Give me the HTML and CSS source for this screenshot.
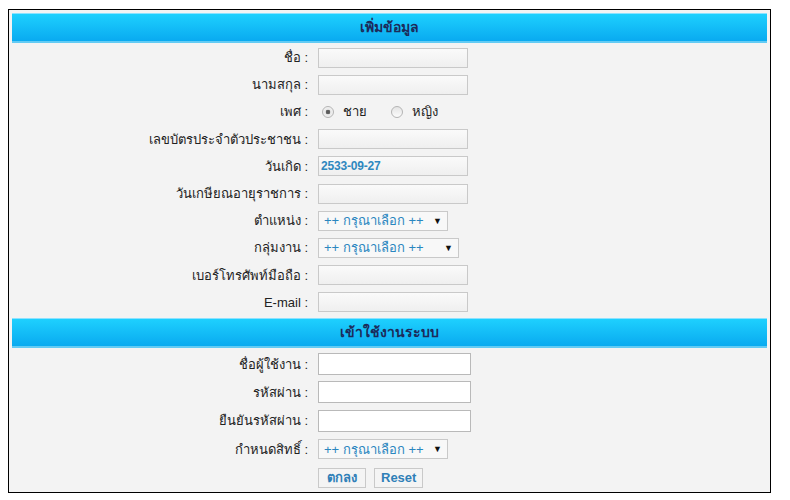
FILE: index.html
```html
<!DOCTYPE html>
<html lang="th">
<head>
    <meta charset="UTF-8">
    <meta name="viewport" content="width=device-width, initial-scale=1.0">
    <title>เพิ่มข้อมูล</title>
    <link rel="stylesheet" href="styles.css">
</head>
<body>
    <form class="panel">
        <div class="bar">เพิ่มข้อมูล</div>
        <div class="rows info">
            <div class="row"><label class="lbl">ชื่อ :</label><input type="text" class="txt"></div>
            <div class="row"><label class="lbl">นามสกุล :</label><input type="text" class="txt"></div>
            <div class="row">
                <label class="lbl">เพศ :</label>
                <div class="radios">
                    <label class="opt"><input type="radio" name="sex" class="rad" checked> ชาย</label>
                    <label class="opt"><input type="radio" name="sex" class="rad"> หญิง</label>
                </div>
            </div>
            <div class="row"><label class="lbl">เลขบัตรประจำตัวประชาชน :</label><input type="text" class="txt"></div>
            <div class="row"><label class="lbl">วันเกิด :</label><input type="text" class="txt date" value="2533-09-27"></div>
            <div class="row"><label class="lbl">วันเกษียณอายุราชการ :</label><input type="text" class="txt"></div>
            <div class="row">
                <label class="lbl">ตำแหน่ง :</label>
                <div class="sel"><select><option>++ กรุณาเลือก ++</option></select><span class="arrow">▼</span></div>
            </div>
            <div class="row">
                <label class="lbl">กลุ่มงาน :</label>
                <div class="sel wide"><select><option>++ กรุณาเลือก ++</option></select><span class="arrow">▼</span></div>
            </div>
            <div class="row"><label class="lbl">เบอร์โทรศัพท์มือถือ :</label><input type="text" class="txt"></div>
            <div class="row"><label class="lbl">E-mail :</label><input type="text" class="txt"></div>
        </div>

        <div class="bar">เข้าใช้งานระบบ</div>
        <div class="rows login">
            <div class="row"><label class="lbl">ชื่อผู้ใช้งาน :</label><input type="text" class="txt big"></div>
            <div class="row"><label class="lbl">รหัสผ่าน :</label><input type="password" class="txt big"></div>
            <div class="row"><label class="lbl">ยืนยันรหัสผ่าน :</label><input type="password" class="txt big"></div>
            <div class="row">
                <label class="lbl">กำหนดสิทธิ์ :</label>
                <div class="sel"><select><option>++ กรุณาเลือก ++</option></select><span class="arrow">▼</span></div>
            </div>
            <div class="row">
                <span class="lbl"></span>
                <div class="btns">
                    <button type="submit" class="btn">ตกลง</button>
                    <button type="reset" class="btn">Reset</button>
                </div>
            </div>
        </div>
    </form>
</body>
</html>
```

FILE: styles.css
```css
body {
    margin: 8px;
    background: #fff;
    font-family: Tahoma, "Liberation Sans", "DejaVu Sans", sans-serif;
    font-size: 13px;
    color: #222;
}
.panel {
    width: 755px;
    margin: 1px 0 0 0;
    padding: 3px 3px 0 3px;
    border: 1px solid #000;
    background-color: #f3f3f3;
}
.bar {
    height: 30px;
    box-sizing: border-box;
    border-top: 1px solid #8be2ff;
    border-bottom: 2px solid #62cbf4;
    background: linear-gradient(#1ed0fe, #09aaf0);
    text-align: center;
    font-weight: bold;
    font-size: 14px;
    line-height: 26px;
    color: #1c2b5a;
}
.rows.info {
    padding: 1px 0 2px 0;
}
.rows.info .row {
    height: 27.2px;
}
.rows.login {
    padding-top: 2px;
}
.rows.login .row {
    height: 28.4px;
}
.row {
    display: flex;
    align-items: center;
}
.lbl {
    width: 296px;
    padding-right: 2px;
    margin-right: 8px;
    text-align: right;
    white-space: nowrap;
}
.txt {
    width: 150px;
    height: 20px;
    box-sizing: border-box;
    margin: 0;
    padding: 0 2px;
    border: 1px solid #c9c9c9;
    background: linear-gradient(#fafafa, #efefef);
    font-family: "Liberation Sans", sans-serif;
    font-size: 12px;
}
.txt.date {
    color: #2f88bf;
    font-weight: bold;
    letter-spacing: -0.2px;
}
.txt.big {
    width: 153px;
    height: 22px;
    border-color: #b9b9b9;
    background: #fff;
}
.radios {
    display: flex;
    align-items: center;
    gap: 24px;
    padding-left: 4px;
}
.opt {
    display: flex;
    align-items: center;
    gap: 9px;
}
.rad {
    appearance: none;
    -webkit-appearance: none;
    width: 12px;
    height: 12px;
    margin: 0;
    border: 1px solid #b4b4b4;
    border-radius: 50%;
    background: linear-gradient(#e4e4e4, #fbfbfb);
    box-sizing: border-box;
}
.rad:checked {
    background: radial-gradient(circle, #555 0, #666 2px, #e8e8e8 2.6px, #f8f8f8 100%);
}
.sel {
    display: flex;
    align-items: center;
    width: 130px;
    height: 20px;
    box-sizing: border-box;
    border: 1px solid #c9c9c9;
    background: #f8f8f8;
    padding: 0 5px 0 5px;
}
.sel.wide {
    width: 141px;
}
.sel select {
    appearance: none;
    -webkit-appearance: none;
    flex: 1;
    min-width: 0;
    border: none;
    background: transparent;
    padding: 0;
    margin: 0;
    font-family: Tahoma, "Liberation Sans", sans-serif;
    font-size: 13px;
    color: #2a86bf;
    outline: none;
}
.arrow {
    font-size: 9px;
    color: #111;
}
.btns {
    display: flex;
    gap: 8px;
}
.btn {
    height: 20px;
    margin: 0;
    padding: 0 6px;
    border: 1px solid #c9c9c9;
    background: #f4f4f4;
    color: #2f80b8;
    font-family: Tahoma, "Liberation Sans", sans-serif;
    font-size: 13px;
    font-weight: bold;
    line-height: 16px;
}
.btn:first-child {
    width: 48px;
}
.btn:last-child {
    width: 49px;
}
```
